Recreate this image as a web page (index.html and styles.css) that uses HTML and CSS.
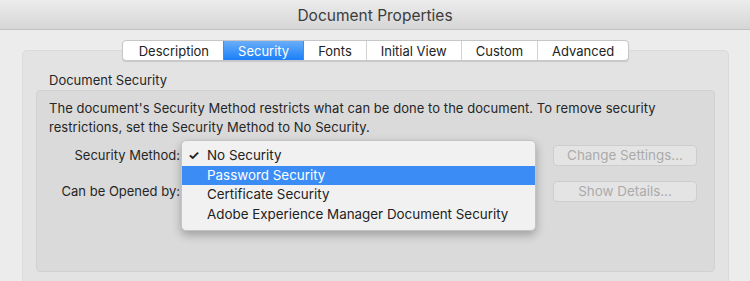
FILE: index.html
```html
<!DOCTYPE html>
<html lang="en">
<head>
    <meta charset="UTF-8">
    <meta name="viewport" content="width=device-width, initial-scale=1.0">
    <title>Document Properties</title>
    <link rel="stylesheet" href="styles.css">
</head>
<body>
<div class="window">
    <div class="titlebar">Document Properties</div>

    <div class="tabview">
        <div class="tabs">
            <div class="tab">Description</div>
            <div class="tab active">Security</div>
            <div class="tab">Fonts</div>
            <div class="tab">Initial View</div>
            <div class="tab">Custom</div>
            <div class="tab">Advanced</div>
        </div>

        <div class="groupLabel">Document Security</div>
        <div class="group">
            <p class="info">The document's Security Method restricts what can be done to the document. To remove security restrictions, set the Security Method to No Security.</p>

            <div class="form">
                <div class="formLabel">Security Method:</div>
                <div class="popupCell">
                    <div class="menu">
                        <div class="menuItem"><span class="check">&#10003;</span>No Security</div>
                        <div class="menuItem selected">Password Security</div>
                        <div class="menuItem">Certificate Security</div>
                        <div class="menuItem">Adobe Experience Manager Document Security</div>
                    </div>
                </div>
                <div class="btn">Change Settings...</div>

                <div class="formLabel">Can be Opened by:</div>
                <div class="popupCell"></div>
                <div class="btn">Show Details...</div>
            </div>
        </div>
    </div>
</div>
</body>
</html>
```

FILE: styles.css
```css
body {
    margin: 0;
    padding: 0;
    font-family: 'Inter', 'Liberation Sans', sans-serif;
    color: #262626;
    background-color: #ececec;
    overflow: hidden;
}
.window {
    width: 750px;
    height: 281px;
    overflow: hidden;
}
.titlebar {
    height: 29px;
    line-height: 31px;
    text-align: center;
    font-size: 15.5px;
    color: #3c3c3c;
    background: linear-gradient(#ececec, #d6d6d6);
    border-bottom: 1px solid #c2c2c2;
}
.tabview {
    margin: 20px 21px 0 22px;
    height: 280px;
    background-color: #e3e3e3;
    border: 1px solid #dadada;
    border-radius: 5px;
    padding: 0 13px;
}
.tabs {
    display: flex;
    justify-content: center;
    margin: -11px auto 0 auto;
    width: max-content;
    height: 19px;
    background-color: white;
    border: 1px solid #c6c6c6;
    border-radius: 4px;
    box-shadow: 0 1px 1px rgba(0, 0, 0, 0.12);
    overflow: hidden;
}
.tab {
    padding: 0 14px;
    font-size: 13px;
    line-height: 20px;
    color: #222;
    border-left: 1px solid #d2d2d2;
}
.tab:first-child {
    border-left: none;
    padding-left: 16px;
}
.tab.active {
    color: white;
    background: linear-gradient(#69aef9, #1b7ff8);
    border-left-color: #3a8ef5;
}
.tab.active + .tab {
    border-left-color: #3a8ef5;
}
.groupLabel {
    font-size: 13px;
    margin: 11px 0 0 13px;
    line-height: 17px;
}
.group {
    margin-top: 1px;
    height: 180px;
    background-color: #dadada;
    border: 1px solid #d1d1d1;
    border-radius: 4px;
    padding: 0 12px;
}
.info {
    margin: 8px 0 0 0;
    font-size: 13px;
    line-height: 19px;
    letter-spacing: 0.05px;
}
.form {
    display: grid;
    grid-template-columns: 144px 355px 161px;
    grid-auto-rows: 21px;
    row-gap: 15px;
    margin: 8px 0 0 -12px;
}
.formLabel {
    font-size: 13px;
    line-height: 21px;
    text-align: right;
    padding-right: 1px;
}
.popupCell {
    position: relative;
}
.menu {
    position: absolute;
    top: -5px;
    left: 0;
    width: 353px;
    padding: 5px 0 6px 0;
    background-color: #f1f1f1;
    border: 1px solid #c4c4c4;
    border-radius: 5px;
    box-shadow: 0 4px 10px rgba(0, 0, 0, 0.28);
    z-index: 2;
}
.menuItem {
    position: relative;
    height: 19.5px;
    line-height: 19.5px;
    padding-left: 25px;
    font-size: 13.4px;
    color: #222;
}
.menuItem.selected {
    background-color: #3b8df5;
    color: white;
}
.check {
    position: absolute;
    left: 6px;
    font-size: 13px;
    font-weight: bold;
}
.btn {
    margin-left: 17px;
    height: 19px;
    line-height: 19px;
    text-align: center;
    font-size: 13.4px;
    color: #ababab;
    background-color: #e4e4e4;
    border: 1px solid #cdcdcd;
    border-radius: 4px;
}
```
